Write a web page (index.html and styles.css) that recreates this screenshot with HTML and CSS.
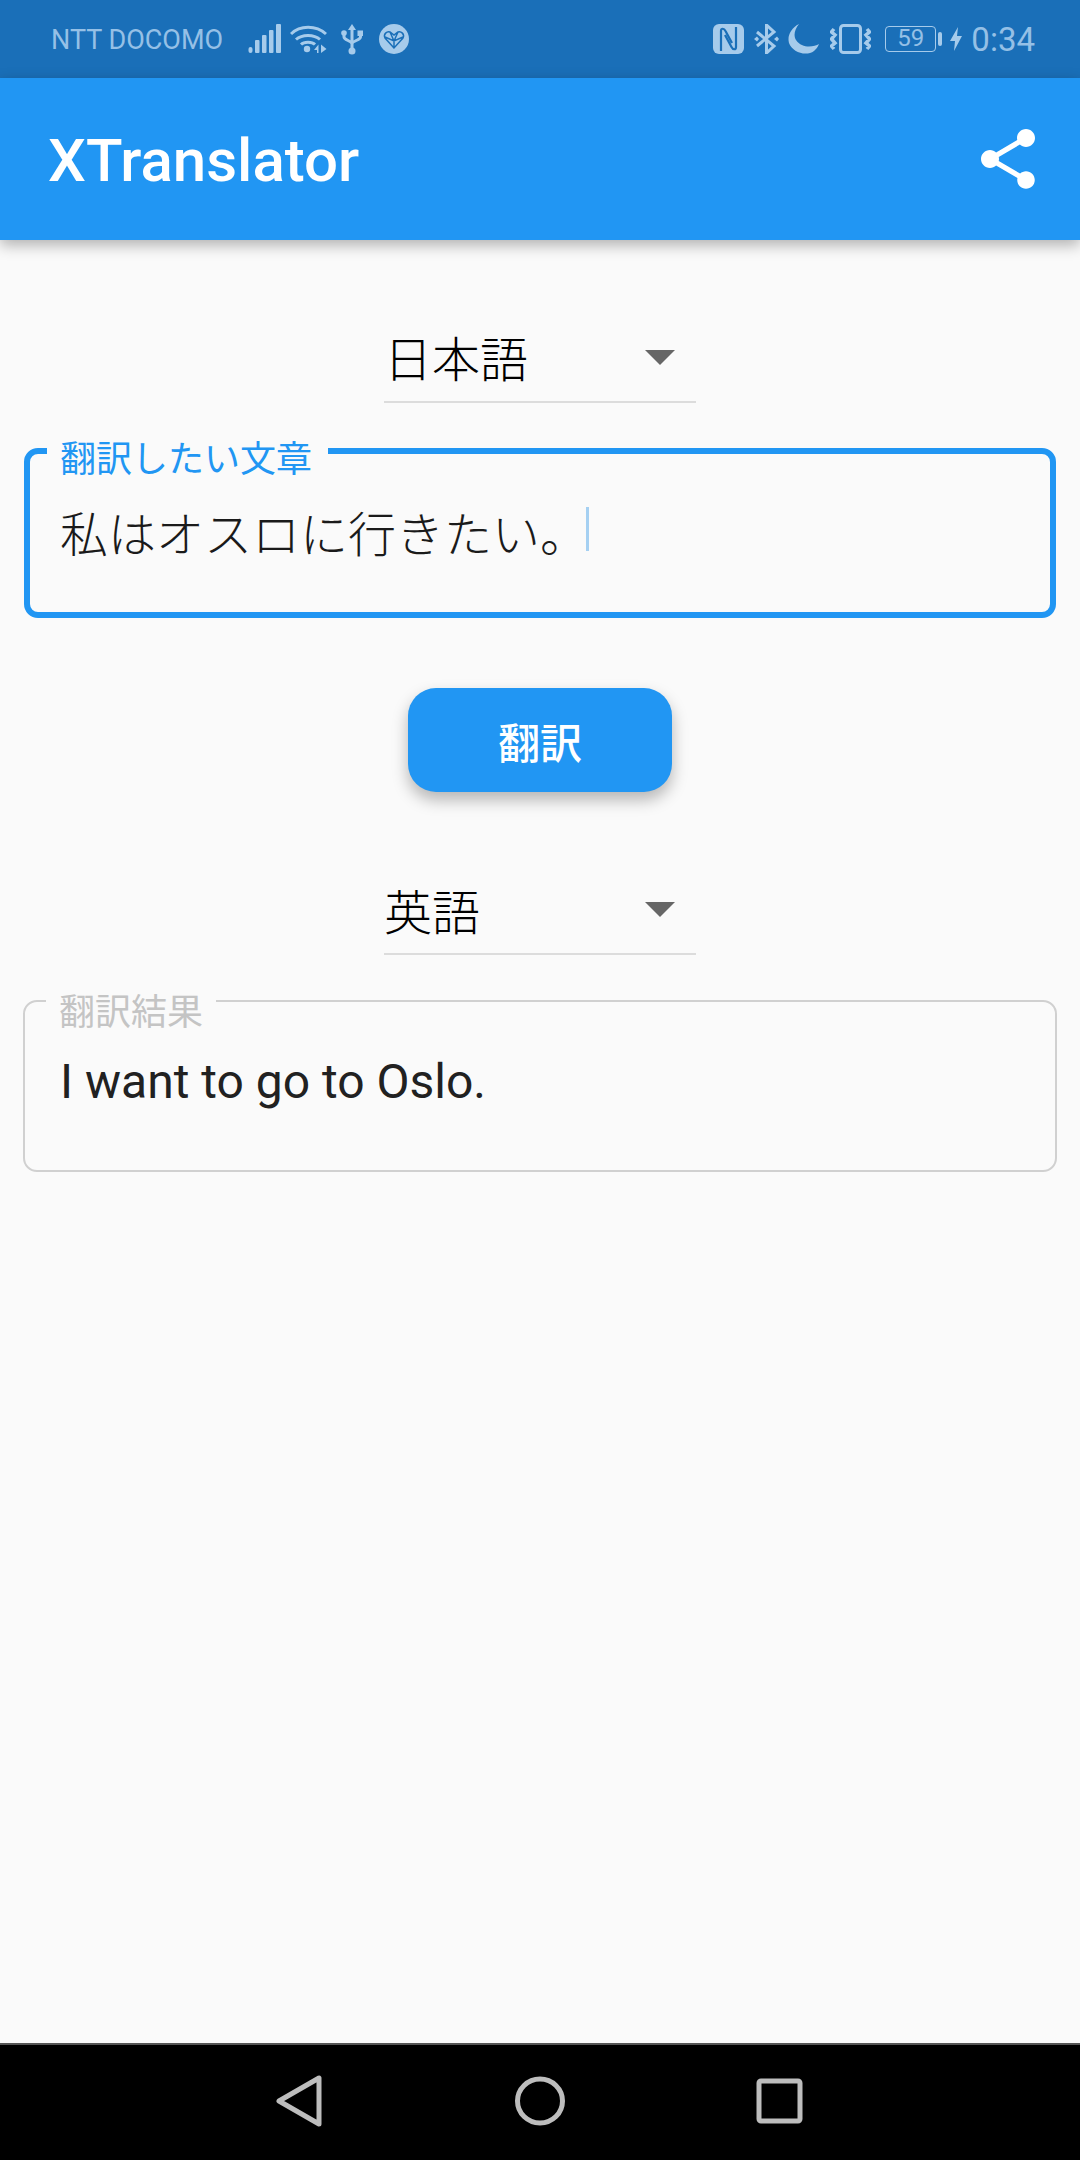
FILE: index.html
```html
<!DOCTYPE html>
<html lang="ja">
<head>
    <meta charset="UTF-8">
    <meta name="viewport" content="width=device-width, initial-scale=1.0">
    <title>XTranslator</title>
    <link rel="stylesheet" href="styles.css">
</head>
<body>
    <div class="status-bar">
        <div class="status-group">
            <span class="carrier">NTT DOCOMO</span>
            <svg class="ic-signal" width="34" height="30" viewBox="0 0 34 30">
                <rect x="0.5" y="23" width="4" height="6" rx="2"/>
                <rect x="7" y="16" width="4.5" height="13" rx="1"/>
                <rect x="14" y="11" width="4.5" height="18" rx="1"/>
                <rect x="21" y="6" width="4.5" height="23" rx="1"/>
                <rect x="28" y="0" width="5" height="29" rx="1"/>
            </svg>
            <svg class="ic-wifi" width="37" height="30" viewBox="0 0 37 30">
                <path class="line" d="M1 10C10 1 26 1 36 10M6 15.500C12 10 24 10 30 15.500M11 20.500C14 17.500 22 17.500 25 20.500"/>
                <circle cx="17" cy="25" r="3.200"/>
                <path d="M24 26L28.500 20.500V29H27V26ZM31 20.500L36.500 25L31 29Z"/>
            </svg>
            <svg class="ic-usb" width="22" height="31" viewBox="0 0 22 31">
                <path class="line" d="M11 3V26M3 10V13C3 16 11 17 11 20M19.500 10V13C19.500 16 11 17 11 20"/>
                <path d="M11 0L15 6H7Z"/>
                <circle cx="3" cy="9" r="2.800"/>
                <rect x="16.500" y="6.500" width="6" height="5.500"/>
                <circle cx="11" cy="27" r="3.500"/>
            </svg>
            <svg class="ic-heart" width="30" height="30" viewBox="0 0 30 30">
                <circle cx="15" cy="15" r="15"/>
                <path class="cut" d="M15 24L6 14C4 10 8 7 11 8L15 11L19 8C22 7 26 10 24 14ZM6 13L15 17L24 13M11 8L15 17L19 8M15 17V24"/>
            </svg>
        </div>
        <div class="status-group">
            <svg class="ic-nfc" width="31" height="30" viewBox="0 0 31 30">
                <rect width="31" height="30" rx="6"/>
                <path class="cut wide" d="M8 27V7C8 4 11 4 12.500 7L19 19M23 3V23C23 26 20 26 18.500 23L12 11"/>
            </svg>
            <svg class="ic-bt" width="25" height="30" viewBox="0 0 25 30">
                <path class="line" d="M3 8L20 22L12.500 29V1L20 8L3 22"/>
                <path d="M0 15L3 12.500L5 15L3 17.500ZM20 15L23 12.500L25 15L23 17.500Z"/>
            </svg>
            <svg class="ic-moon" width="31" height="30" viewBox="0 0 31 30">
                <path d="M11 0C3 4 -1 12 1 19C4 28 18 33 26 27C28 25 30 23 31 20C26 23 14 25 8 16C5 11 7 5 11 0Z"/>
            </svg>
            <svg class="ic-vibrate" width="41" height="30" viewBox="0 0 41 30">
                <rect class="line" x="10.500" y="1.500" width="20" height="27" rx="3"/>
                <path class="line thick" d="M4 5L1.500 8L5 11L1.500 15L5 19L1.500 22L4 25M37 5L39.500 8L36 11L39.500 15L36 19L39.500 22L37 25"/>
            </svg>
            <div class="battery">
                <span class="battery-body">59</span>
                <span class="battery-nub"></span>
            </div>
            <svg class="ic-bolt" width="12" height="24" viewBox="0 0 12 24">
                <path d="M8 0L0 14H5L4 24L12 9H7Z"/>
            </svg>
            <span class="clock">0:34</span>
        </div>
    </div>

    <header class="app-bar">
        <h1>XTranslator</h1>
        <svg class="share" width="72" height="72" viewBox="0 0 24 24">
            <path d="M18 16.080c-.76 0-1.440.3-1.960.77L8.910 12.700c.05-.23.09-.46.09-.7s-.04-.47-.09-.7l7.050-4.110c.54.5 1.250.81 2.040.81 1.660 0 3-1.340 3-3s-1.340-3-3-3-3 1.340-3 3c0 .24.04.47.09.7L8.040 9.810C7.500 9.310 6.790 9 6 9c-1.660 0-3 1.340-3 3s1.340 3 3 3c.79 0 1.500-.31 2.040-.81l7.120 4.160c-.05.21-.08.43-.08.65 0 1.610 1.310 2.920 2.920 2.920 1.610 0 2.920-1.310 2.920-2.920s-1.310-2.920-2.920-2.920z"/>
        </svg>
    </header>

    <main class="content">
        <div class="picker picker-source">
            <span>日本語</span>
            <i class="arrow"></i>
        </div>

        <div class="field field-active">
            <label class="field-label">翻訳したい文章</label>
            <div class="field-text">
                <span>私はオスロに行きたい。</span>
                <i class="caret"></i>
            </div>
        </div>

        <button class="translate" type="button">翻訳</button>

        <div class="picker picker-target">
            <span>英語</span>
            <i class="arrow"></i>
        </div>

        <div class="field field-result">
            <label class="field-label">翻訳結果</label>
            <div class="field-text">
                <span>I want to go to Oslo.</span>
            </div>
        </div>
    </main>

    <nav class="nav-bar">
        <svg width="60" height="54" viewBox="0 0 60 54">
            <path d="M9 27L49 4V50Z"/>
        </svg>
        <svg width="60" height="54" viewBox="0 0 60 54">
            <ellipse cx="30" cy="27" rx="22.500" ry="22"/>
        </svg>
        <svg width="60" height="54" viewBox="0 0 60 54">
            <rect x="9" y="7" width="41" height="40" rx="2"/>
        </svg>
    </nav>
</body>
</html>
```

FILE: styles.css
```css
* {
    box-sizing: border-box;
}
body {
    margin: 0;
    width: 1080px;
    height: 2160px;
    display: flex;
    flex-direction: column;
    background: #fafafa;
    font-family: 'Roboto', 'Noto Sans CJK JP', sans-serif;
    overflow: hidden;
}

/* status bar */
.status-bar {
    height: 78px;
    flex: none;
    display: flex;
    justify-content: space-between;
    align-items: center;
    padding: 0 45px 0 51px;
    background: #1a6fb8;
    color: #95c0e6;
}
.status-group {
    display: flex;
    align-items: center;
}
.status-bar svg {
    fill: #a6cbeb;
    display: block;
}
.status-bar .line {
    fill: none;
    stroke: #a6cbeb;
    stroke-width: 3;
}
.status-bar .thick {
    stroke-width: 3.5;
}
.status-bar .cut {
    fill: none;
    stroke: #1a6fb8;
    stroke-width: 1.5;
}
.status-bar .wide {
    stroke-width: 2.2;
}
.carrier {
    font-size: 27px;
    line-height: 32px;
    padding-top: 2px;
    width: 173px;
    white-space: nowrap;
}
.ic-signal { margin-left: 24px; }
.ic-wifi { margin-left: 8px; }
.ic-usb { margin-left: 14px; }
.ic-heart { margin-left: 16px; }
.ic-bt { margin-left: 10px; }
.ic-moon { margin-left: 9px; }
.ic-vibrate { margin-left: 11px; }
.battery {
    margin-left: 14px;
    display: flex;
    align-items: center;
}
.battery-body {
    width: 51px;
    height: 26px;
    border: 1.5px solid #a6cbeb;
    border-radius: 4px;
    font-size: 24px;
    line-height: 23px;
    text-align: center;
}
.battery-nub {
    width: 4px;
    height: 14px;
    margin-left: 2px;
    background: #a6cbeb;
    border-radius: 2px;
}
.ic-bolt { margin-left: 8px; }
.clock {
    margin-left: 9px;
    font-size: 33px;
}

/* app bar */
.app-bar {
    height: 162px;
    flex: none;
    display: flex;
    justify-content: space-between;
    align-items: center;
    padding: 0 36px 0 48px;
    background: #2196f3;
    box-shadow: 0 5px 14px rgba(0, 0, 0, 0.3);
    position: relative;
}
.app-bar h1 {
    margin: 0;
    padding-top: 2px;
    font-size: 60px;
    font-weight: 500;
    color: #fff;
}
.share {
    fill: #fff;
}

/* main form */
.content {
    flex: 1;
    display: flex;
    flex-direction: column;
    align-items: center;
}
.picker {
    width: 312px;
    height: 90px;
    display: flex;
    justify-content: space-between;
    align-items: center;
    border-bottom: 2px solid #dcdcdc;
    font-size: 48px;
    font-weight: 300;
    color: #000;
}
.picker-source {
    margin-top: 73px;
    padding-bottom: 3px;
}
.picker-source .arrow {
    margin-top: 3px;
}
.picker-target {
    margin-top: 73px;
}
.arrow {
    width: 0;
    height: 0;
    margin-right: 21px;
    border-left: 15px solid transparent;
    border-right: 15px solid transparent;
    border-top: 15px solid #666;
}
.field {
    position: relative;
    display: flex;
}
.field-active {
    width: 1032px;
    height: 170px;
    margin-top: 45px;
    border: 6px solid #2196f3;
    border-radius: 14px;
    padding: 50px 36px 0 30px;
}
.field-result {
    width: 1034px;
    height: 172px;
    margin-top: 45px;
    border: 2px solid #d0d0d0;
    border-radius: 14px;
    padding: 48px 36px 0 35px;
}
.field-label {
    position: absolute;
    top: -14px;
    left: 17px;
    padding: 0 16px 0 13px;
    background: #fafafa;
    font-size: 36px;
    line-height: 40px;
}
.field-active .field-label {
    color: #2196f3;
}
.field-result .field-label {
    top: -9px;
    left: 21px;
    padding-right: 13px;
    color: #c4c4c4;
}
.field-text {
    display: flex;
    align-items: flex-start;
    font-size: 48px;
    font-weight: 300;
    line-height: 64px;
    color: #1a1a1a;
}
.field-result .field-text {
    font-weight: 400;
    color: #212121;
}
.caret {
    width: 3px;
    height: 44px;
    margin: 3px 0 0 -2px;
    background: #a5d0f2;
}
.translate {
    width: 264px;
    height: 104px;
    margin-top: 70px;
    border: none;
    border-radius: 28px;
    background: #2196f3;
    color: #fff;
    font-family: inherit;
    font-size: 42px;
    font-weight: 500;
    box-shadow: 0 8px 16px rgba(0, 0, 0, 0.28);
}

/* nav bar */
.nav-bar {
    height: 117px;
    flex: none;
    display: flex;
    justify-content: center;
    align-items: center;
    gap: 180px;
    padding-bottom: 3px;
    background: #000;
    border-top: 2px solid #555;
}
.nav-bar svg {
    fill: none;
    stroke: #bdbdbd;
    stroke-width: 5;
    stroke-linejoin: round;
}
```
